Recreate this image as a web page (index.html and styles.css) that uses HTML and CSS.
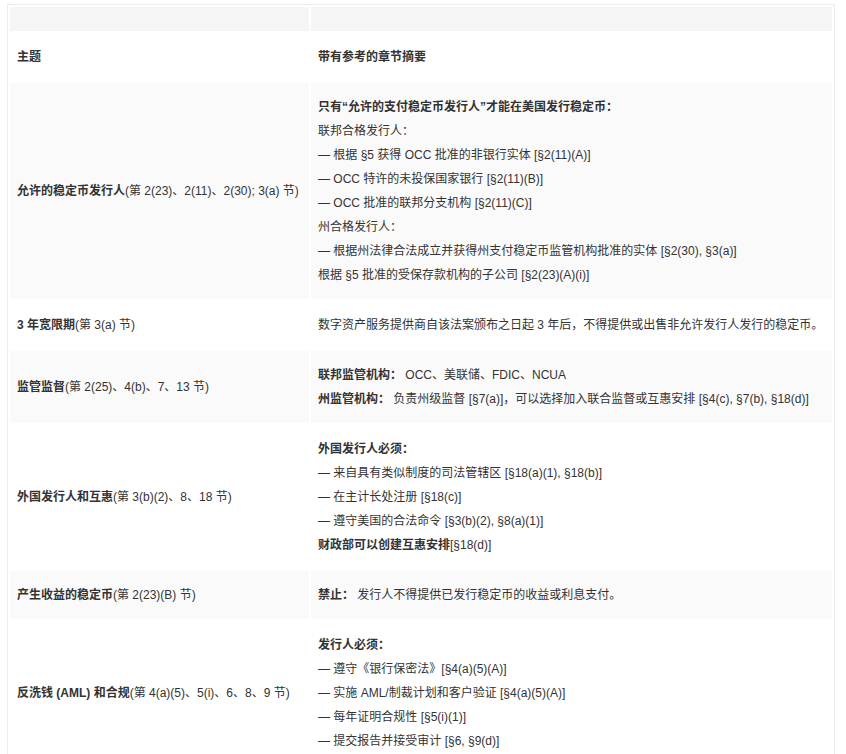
FILE: index.html
```html
<!DOCTYPE html>
<html lang="zh-CN">
<head>
<meta charset="utf-8">
<title>稳定币法案摘要</title>
<link rel="stylesheet" href="styles.css">
</head>
<body>
<table class="summary">
  <colgroup>
    <col class="col-topic">
    <col class="col-detail">
  </colgroup>
  <tbody>
    <tr class="row-top"><td></td><td></td></tr>
    <tr class="row-head">
      <td><b>主题</b></td>
      <td><b>带有参考的章节摘要</b></td>
    </tr>
    <tr class="row-alt">
      <td><b>允许的稳定币发行人</b>(第 2(23)、2(11)、2(30); 3(a) 节)</td>
      <td>
        <div class="ln"><b>只有“允许的支付稳定币发行人”才能在美国发行稳定币：</b></div>
        <div class="ln">联邦合格发行人：</div>
        <div class="ln">— 根据 §5 获得 OCC 批准的非银行实体 [§2(11)(A)]</div>
        <div class="ln">— OCC 特许的未投保国家银行 [§2(11)(B)]</div>
        <div class="ln">— OCC 批准的联邦分支机构 [§2(11)(C)]</div>
        <div class="ln">州合格发行人：</div>
        <div class="ln">— 根据州法律合法成立并获得州支付稳定币监管机构批准的实体 [§2(30), §3(a)]</div>
        <div class="ln">根据 §5 批准的受保存款机构的子公司 [§2(23)(A)(i)]</div>
      </td>
    </tr>
    <tr>
      <td><b>3 年宽限期</b>(第 3(a) 节)</td>
      <td><div class="ln">数字资产服务提供商自该法案颁布之日起 3 年后，不得提供或出售非允许发行人发行的稳定币。</div></td>
    </tr>
    <tr class="row-alt">
      <td><b>监管监督</b>(第 2(25)、4(b)、7、13 节)</td>
      <td>
        <div class="ln"><b>联邦监管机构：</b> OCC、美联储、FDIC、NCUA</div>
        <div class="ln"><b>州监管机构：</b> 负责州级监督 [§7(a)]，可以选择加入联合监督或互惠安排 [§4(c), §7(b), §18(d)]</div>
      </td>
    </tr>
    <tr>
      <td><b>外国发行人和互惠</b>(第 3(b)(2)、8、18 节)</td>
      <td>
        <div class="ln"><b>外国发行人必须：</b></div>
        <div class="ln">— 来自具有类似制度的司法管辖区 [§18(a)(1), §18(b)]</div>
        <div class="ln">— 在主计长处注册 [§18(c)]</div>
        <div class="ln">— 遵守美国的合法命令 [§3(b)(2), §8(a)(1)]</div>
        <div class="ln"><b>财政部可以创建互惠安排</b>[§18(d)]</div>
      </td>
    </tr>
    <tr class="row-alt">
      <td><b>产生收益的稳定币</b>(第 2(23)(B) 节)</td>
      <td><div class="ln"><b>禁止：</b> 发行人不得提供已发行稳定币的收益或利息支付。</div></td>
    </tr>
    <tr>
      <td><b>反洗钱 (AML) 和合规</b>(第 4(a)(5)、5(i)、6、8、9 节)</td>
      <td>
        <div class="ln"><b>发行人必须：</b></div>
        <div class="ln">— 遵守《银行保密法》[§4(a)(5)(A)]</div>
        <div class="ln">— 实施 AML/制裁计划和客户验证 [§4(a)(5)(A)]</div>
        <div class="ln">— 每年证明合规性 [§5(i)(1)]</div>
        <div class="ln">— 提交报告并接受审计 [§6, §9(d)]</div>
      </td>
    </tr>
  </tbody>
</table>
</body>
</html>
```

FILE: styles.css
```css
html, body {
  margin: 0;
  padding: 0;
  background: #ffffff;
}

body {
  padding: 4px 0 0 7px;
  font-family: "Liberation Sans", "Noto Sans CJK SC", sans-serif;
  font-size: 12px;
  color: #333333;
}

.summary {
  width: 828px;
  table-layout: fixed;
  border-collapse: separate;
  border-spacing: 2px;
  border: 1px solid #ededed;
}

.col-topic {
  width: 299px;
}

.summary td {
  box-sizing: border-box;
  padding: 12px 7px;
  line-height: 24px;
  vertical-align: middle;
  text-align: left;
}

.summary b {
  font-weight: 700;
}

.row-top td {
  background: #f5f5f5;
  height: 24px;
}

.row-alt td {
  background: #fafafa;
}

.ln {
  line-height: 24px;
  white-space: nowrap;
}
```
